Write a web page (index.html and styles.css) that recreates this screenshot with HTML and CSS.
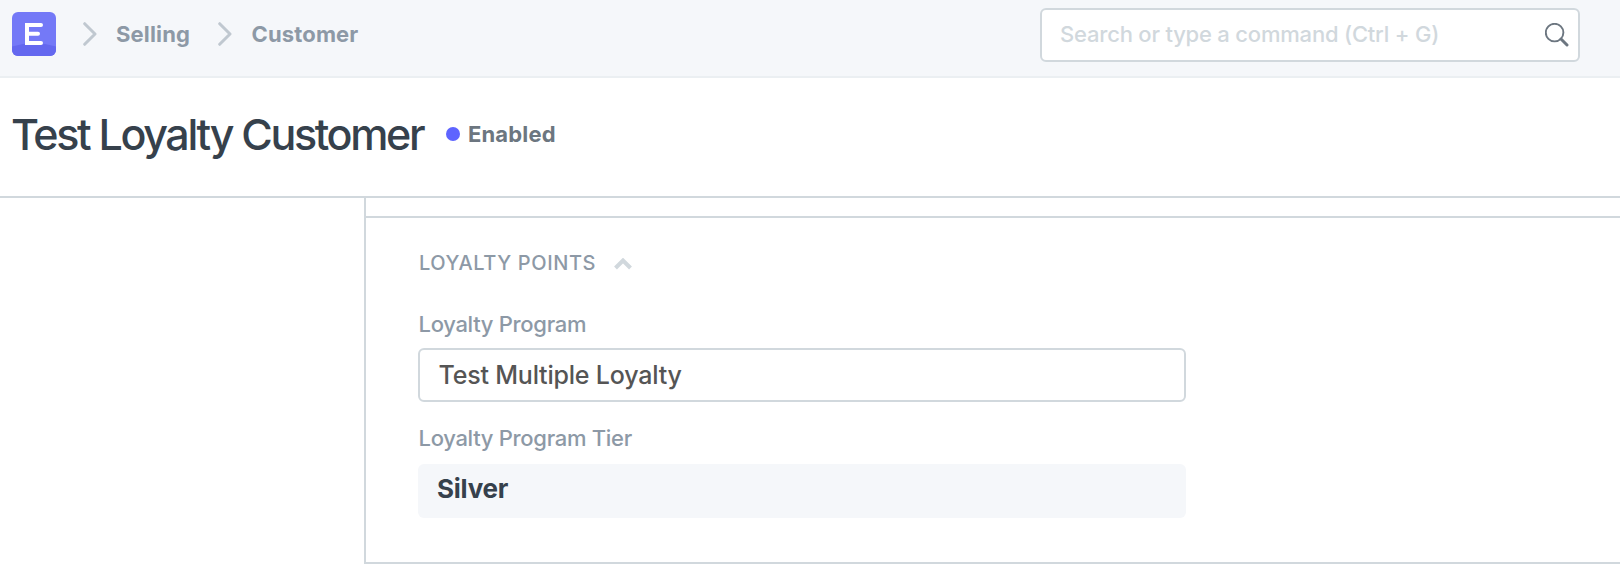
FILE: index.html
```html
<!DOCTYPE html>
<html lang="en">
<head>
<meta charset="utf-8">
<title>Test Loyalty Customer</title>
<link rel="stylesheet" href="styles.css">
</head>
<body>
<header class="navbar">
  <nav class="breadcrumbs">
    <svg class="logo" viewBox="0 0 44 44"><defs><clipPath id="r"><rect width="44" height="44" rx="6"/></clipPath></defs><g clip-path="url(#r)"><path fill="#7479f7" d="M0 0h44v44H0z"/><path fill="#6468ef" d="M0 34.5Q22 28 44 34.5V44H0z"/></g><path d="M29 13H15v18h14M15 21.8h11" fill="none" stroke="#fff" stroke-width="4" stroke-linecap="round" stroke-linejoin="miter"/></svg>
    <svg class="sep" viewBox="0 0 14 24"><path d="M1.7 1.7 12 12 1.7 22.3"/></svg>
    <a class="crumb selling">Selling</a>
    <svg class="sep second" viewBox="0 0 14 24"><path d="M1.7 1.7 12 12 1.7 22.3"/></svg>
    <a class="crumb customer">Customer</a>
  </nav>
  <div class="search"><span class="placeholder">Search or type a command (Ctrl + G)</span>
    <svg class="glass" viewBox="0 0 24 24"><circle cx="9.6" cy="9.6" r="8.8" stroke-width="1.9"/><path d="m16 16 6 6" stroke-width="3" stroke-linecap="round"/></svg>
  </div>
</header>
<div class="page-head">
  <h1 class="title">Test Loyalty Customer</h1>
  <span class="dot"></span><span class="status">Enabled</span>
</div>
<main class="layout">
  <aside class="sidebar"></aside>
  <div class="form">
    <div class="previous"></div>
    <section class="section">
      <h2 class="section-head"><span class="section-title">LOYALTY POINTS</span><svg class="caret" viewBox="0 0 18 12"><path d="m1.5 10 7.5-7.5 7.5 7.5"/></svg></h2>
      <label class="label program">Loyalty Program</label>
      <div class="input">Test Multiple Loyalty</div>
      <label class="label tier">Loyalty Program Tier</label>
      <div class="readonly">Silver</div>
    </section>
  </div>
</main>
</body>
</html>
```
FILE: styles.css
```css
* { box-sizing: border-box; }
body { margin: 0; width: 1620px; height: 564px; overflow: hidden; background: #fff; font-family: Inter, "Liberation Sans", sans-serif; color: #36414c; }
svg { display: block; flex: none; }
.navbar { display: flex; justify-content: space-between; height: 78px; padding: 8px 40px 0 12px; background: #f5f7fa; border-bottom: 2px solid #ebeff2; }
.breadcrumbs { display: flex; align-items: center; height: 52px; white-space: nowrap; }
.logo { width: 44px; height: 44px; }
.sep { width: 14px; height: 24px; margin: 0 19.5px 0 26.5px; fill: none; stroke: #c0c8d0; stroke-width: 3; stroke-linecap: round; stroke-linejoin: round; }
.crumb { font-size: 22px; font-weight: 700; color: #8d99a6; }
.selling { width: 75.5px; letter-spacing: 0.15px; }
.customer { letter-spacing: 0.15px; }
.search { display: flex; align-items: center; justify-content: space-between; width: 540px; height: 54px; padding: 0 9px 2px 18px; background: #fff; border: 2px solid #d1d8dd; border-radius: 6px; }
.placeholder { font-size: 22px; font-weight: 450; letter-spacing: -0.2px; color: #d1d8dd; white-space: nowrap; }
.glass { width: 24px; height: 24px; margin-top: 2px; fill: none; stroke: #6c7680; }
.page-head { display: flex; align-items: center; height: 120px; padding: 0 0 6px 12px; border-bottom: 2px solid #d1d8dd; }
.title { margin: 0 0 0 -1px; width: 435px; font-size: 43px; font-weight: 500; letter-spacing: -2.35px; line-height: 56px; white-space: nowrap; }
.dot { width: 14px; height: 14px; margin-right: 8px; border-radius: 50%; background: #5e64ff; }
.status { font-size: 22px; font-weight: 700; letter-spacing: 0.15px; color: #6c7680; }
.layout { display: flex; height: 366px; }
.sidebar { width: 364px; }
.form { flex: 1; border-left: 2px solid #d1d8dd; border-bottom: 2px solid #d1d8dd; }
.previous { height: 20px; border-bottom: 2px solid #d1d8dd; }
.section { width: 820px; padding: 30px 0 0 52px; }
.section-head { display: flex; align-items: center; margin: 0; height: 30px; font-size: 20px; font-weight: 450; color: #8d99a6; white-space: nowrap; }
.section-title { width: 196px; padding-left: 1px; letter-spacing: 0.6px; }
.caret { width: 18px; height: 12px; margin-top: 2px; fill: none; stroke: #d1d8dd; stroke-width: 4; }
.label { display: block; height: 30px; padding-left: 0.5px; font-size: 22px; font-weight: 450; line-height: 30px; letter-spacing: -0.3px; color: #8d99a6; }
.program { margin: 31px 0 9px; }
.tier { margin: 21px 0 11px; }
.input, .readonly { height: 54px; border-radius: 6px; }
.input { padding-left: 18.5px; border: 2px solid #d1d8dd; font-size: 25px; font-weight: 450; line-height: 50px; letter-spacing: -0.2px; color: #555; }
.readonly { padding-left: 19px; background: #f5f7fa; font-size: 26px; font-weight: 700; line-height: 50px; letter-spacing: -0.25px; }
```
